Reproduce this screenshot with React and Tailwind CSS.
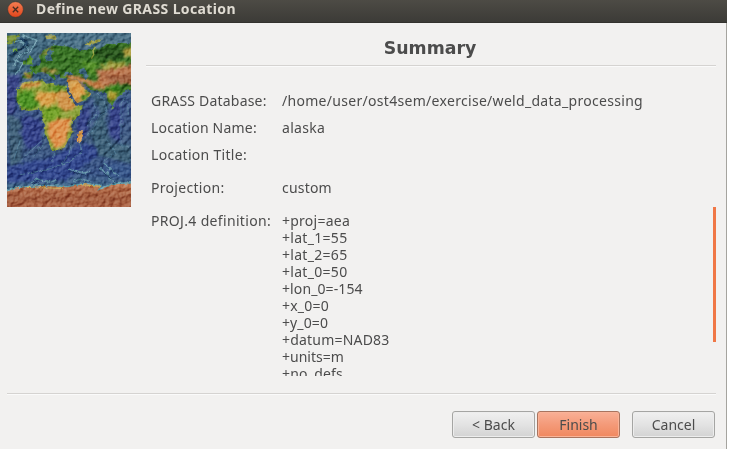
const summaryRows = [
  { label: 'GRASS Database:', value: '/home/user/ost4sem/exercise/weld_data_processing', gap: 'h-[27px]', labelFit: 'tracking-[0.2px]', fit: 'tracking-[0.3px]' },
  { label: 'Location Name:', value: 'alaska', gap: 'h-[27px]', labelFit: 'tracking-[0.2px]', fit: 'tracking-[0.3px]' },
  { label: 'Location Title:', value: '', gap: 'h-[33px]', labelFit: 'tracking-[0.3px]', fit: '' },
  { label: 'Projection:', value: 'custom', gap: 'h-[33px]', labelFit: 'tracking-[0.3px]', fit: 'tracking-[0.2px]' },
];

const projLines = [
  { text: '+proj=aea', fit: 'tracking-[0.25px]' },
  { text: '+lat_1=55', fit: 'tracking-[0.3px]' },
  { text: '+lat_2=65', fit: 'tracking-[0.3px]' },
  { text: '+lat_0=50', fit: 'tracking-[0.3px]' },
  { text: '+lon_0=-154', fit: 'tracking-[0.1px]' },
  { text: '+x_0=0', fit: 'tracking-[0.2px]' },
  { text: '+y_0=0', fit: 'tracking-[0.1px]' },
  { text: '+datum=NAD83', fit: 'tracking-[0.2px]' },
  { text: '+units=m', fit: '' },
  { text: '+no_defs', fit: 'tracking-[0.2px]' },
];

function ReliefMap() {
  return (
    <svg className="block h-[174px] w-[124px] shrink-0" viewBox="0 0 372 522" preserveAspectRatio="none">
      <defs>
        <linearGradient id="sea" x1="0" y1="0" x2="0" y2="1">
          <stop offset="0" stopColor="#456b80" />
          <stop offset="0.22" stopColor="#3e647e" />
          <stop offset="0.42" stopColor="#3b5487" />
          <stop offset="0.62" stopColor="#3e5a80" />
          <stop offset="0.8" stopColor="#385386" />
          <stop offset="0.9" stopColor="#456d8c" />
        </linearGradient>
        <linearGradient id="ice" x1="0" y1="0" x2="0" y2="1">
          <stop offset="0" stopColor="#c27c55" />
          <stop offset="0.5" stopColor="#a35d3f" />
          <stop offset="1" stopColor="#b46a4c" />
        </linearGradient>
        <filter id="coast" x="-5%" y="-5%" width="110%" height="110%" colorInterpolationFilters="sRGB">
          <feTurbulence type="fractalNoise" baseFrequency="0.12" numOctaves="2" seed="4" />
          <feDisplacementMap in="SourceGraphic" scale="10" xChannelSelector="R" yChannelSelector="G" />
        </filter>
        <filter id="soft" x="-20%" y="-20%" width="140%" height="140%" colorInterpolationFilters="sRGB">
          <feTurbulence type="fractalNoise" baseFrequency="0.1" numOctaves="3" seed="9" />
          <feDisplacementMap in="SourceGraphic" scale="24" xChannelSelector="R" yChannelSelector="G" />
          <feGaussianBlur stdDeviation="2.5" />
        </filter>
        <filter id="relief" x="0" y="0" width="100%" height="100%" colorInterpolationFilters="sRGB">
          <feTurbulence type="fractalNoise" baseFrequency="0.07 0.07" numOctaves="3" seed="12" result="n" />
          <feDiffuseLighting in="n" surfaceScale="6" diffuseConstant="0.72" lightingColor="#ffffff">
            <feDistantLight azimuth="225" elevation="45" />
          </feDiffuseLighting>
        </filter>
      </defs>
      <rect width="372" height="522" fill="url(#sea)" />
      <g filter="url(#soft)">
        <path d="M0 130L40 120L35 165L20 240L0 250Z" fill="#3a4688" />
        <path d="M50 245L100 260L108 330L60 350L40 300Z" fill="#35438a" />
        <path d="M215 240L250 215L240 300L205 340Z" fill="#38468a" />
        <path d="M310 225L345 205L340 330L305 300Z" fill="#38458a" />
        <path d="M0 395L110 380L230 330L290 350L180 440L0 450Z" fill="#33488e" />
        <path d="M290 390L372 400L372 435L300 430Z" fill="#37568a" />
        <path d="M0 240L40 260L45 390L10 400Z" fill="#3f5f78" />
        <path d="M250 170L310 200L295 260L310 330L372 340L372 390L280 370L245 300L280 250Z" fill="#3d6078" />
        <path d="M110 0L372 0L372 35L250 50L120 40Z" fill="#4b7187" />
      </g>
      <g fill="none" filter="url(#coast)" strokeLinejoin="round">
        <path d="M45 5L90 22L70 55L40 65L18 100M0 30L40 22L65 50M20 80L48 92L25 125" stroke="#74a1af" strokeWidth="4" />
        <path d="M40 15L62 30L35 55M5 70L30 55" stroke="#1e4162" strokeWidth="7" />
        <path d="M270 180L292 200L300 235L275 250L260 290L240 305M362 185L342 210L342 338L365 340M362 205L364 245M118 285L108 320L75 350L45 380M110 335L80 370M145 360L133 385M195 330L185 365L160 400M218 330L225 355L190 385L120 410L40 425M260 210L270 240L240 280M300 320L325 360L290 385M40 320L20 380" stroke="#54809a" strokeWidth="2.5" />
        <path d="M186 408L230 420L250 415M280 405L325 450M290 390L335 430M300 410L310 440M70 450L90 438L130 448L150 440M195 445L220 438L250 445" stroke="#6091a6" strokeWidth="4" />
        <path d="M280 412L325 447M190 415L235 427M75 455L98 444" stroke="#213d66" strokeWidth="3" />
      </g>
      <g filter="url(#coast)">
        <path d="M0 8L40 5L20 30L0 38Z" fill="#799239" />
        <path d="M18 48L30 46L31 54L14 57Z" fill="#69a137" />
        <path d="M114 8L142 7L150 17L118 18Z" fill="#9b9a4b" />
        <path d="M233 34L250 25L284 17L280 25L246 38Z" fill="#a2a34e" />
        <path d="M61 73L72 68L77 94L58 95Z" fill="#548d27" />
        <path d="M47 84L58 82L58 94L48 95Z" fill="#4c832b" />
        <path d="M96 73L112 50L140 37L186 41L212 51L240 52L262 43L275 55L299 32L324 34L343 29L385 34L385 178L358 168L344 184L327 195L315 220L303 205L298 177L270 175L252 171L229 150L225 137L187 140L160 134L158 122L151 126L140 124L150 141L140 138L115 116L80 120L70 137L49 136L51 120L72 117L67 103L94 98L104 86Z" fill="#397325" />
        <path d="M30 172L52 147L107 142L118 152L138 151L145 158L179 158L190 183L210 218L229 217L217 245L195 265L192 286L200 296L183 321L174 342L148 354L132 350L125 325L112 300L115 277L105 260L107 241L96 229L64 234L43 229L29 205Z" fill="#8ba23a" />
        <path d="M181 137L213 142L220 157L240 175L252 184L244 194L212 211L203 203L187 174Z" fill="#c99748" />
        <path d="M225 290L230 302L221 328L209 323L211 302Z" fill="#d49a4e" />
        <path d="M317 218L322 221L320 229L315 225Z" fill="#659c38" />
      </g>
      <g filter="url(#soft)">
        <path d="M39 153L100 146L94 162L53 167Z" fill="#d39a50" />
        <path d="M92 178L150 177L147 214L120 223L82 200Z" fill="#d9a14a" />
        <path d="M145 176L182 173L207 222L180 238L154 220Z" fill="#d1964d" />
        <path d="M128 262L190 250L190 282L181 315L165 346L138 345L120 290Z" fill="#df944e" />
        <path d="M110 225L155 222L162 255L125 264L108 252Z" fill="#71a027" />
        <path d="M32 178L76 178L98 218L78 229L47 225L32 202Z" fill="#4d9224" />
        <path d="M120 160L172 160L175 172L130 172Z" fill="#4f8a22" />
        <path d="M190 148L225 154L245 180L215 203L199 190Z" fill="#dda24e" />
        <path d="M240 172L252 184L244 194L218 207L228 190Z" fill="#4b8a26" />
        <path d="M165 128L218 130L258 145L293 142L292 170L263 167L230 147L190 140Z" fill="#c5824c" />
        <path d="M270 112L310 105L385 92L385 157L340 153L300 158L273 140Z" fill="#bb7850" />
        <path d="M295 128L385 125L385 158L340 150L305 147Z" fill="#a0603f" />
        <path d="M293 158L335 160L336 178L315 182L298 176Z" fill="#3d871e" />
        <path d="M302 175L332 177L326 192L316 209L305 196Z" fill="#b3a238" />
        <path d="M258 50L285 46L350 42L350 79L297 82L265 70Z" fill="#28551d" />
        <path d="M350 45L385 42L385 75L350 69Z" fill="#b0a044" />
        <path d="M94 71L119 50L140 45L127 58Z" fill="#b49649" />
        <path d="M54 122L72 123L70 134L53 132ZM95 108L150 110L146 124L112 113Z" fill="#c3954d" />
        <path d="M276 98L305 87L360 87L350 103L300 111Z" fill="#9fa142" />
        <path d="M225 85L275 88L262 125L244 118Z" fill="#56912a" />
      </g>
      <g filter="url(#coast)" fill="#3f6980">
        <path d="M124 52L142 54L131 67L138 83L123 84L112 80Z" />
        <path d="M169 116L194 117L198 126L170 128Z" />
        <path d="M215 110L231 104L240 119L242 138L230 137L229 125L218 119Z" />
        <path d="M181 160L188 174L208 211L237 205L228 215L206 218L179 174Z" fill="#395481" />
      </g>
      <path d="M253 77L260 65L258 52L265 42" fill="none" stroke="#9aa845" strokeWidth="4" />
      <g filter="url(#coast)">
        <path d="M-10 480L20 465L55 461L115 457L181 461L235 451L283 457L276 469L318 452L385 449L385 540L-10 540Z" fill="url(#ice)" stroke="#65a1ac" strokeWidth="4" />
        <path d="M60 463L170 466M220 455L282 460" fill="none" stroke="#ccb65a" strokeWidth="3" />
      </g>
      <rect width="372" height="522" filter="url(#relief)" className="mix-blend-soft-light" />
    </svg>
  );
}

function Rule() {
  return <div className="h-[2px] border-t border-[#d5d3d1] bg-[#fafafa]" />;
}

function DialogButton({ children, primary = false }) {
  const tone = primary
    ? 'border-[#a9745f] bg-linear-to-b from-[#f9b096] via-[#f49a79] to-[#f0885f] shadow-[inset_0_0_0_1px_#f9b398]'
    : 'border-[#a5a5a3] bg-linear-to-b from-[#f0f0f0] via-[#e3e3e3] to-[#d3d3d3] shadow-[inset_0_0_0_1px_#ededed]';
  return (
    <button className={`flex h-[27px] w-[83px] items-center justify-center rounded-[3px] border pb-px ${tone}`}>
      {children}
    </button>
  );
}

export default function App() {
  return (
    <div className="h-[449px] w-[729px] overflow-hidden bg-white font-['Noto_Sans','Open_Sans',sans-serif] text-[14px] leading-[17px] text-[#4c4c4c]">
      <div className="flex h-full w-[727px] flex-col">
        <header className="flex h-[23px] shrink-0 items-center border-b border-[#33322e] bg-linear-to-b from-[#4d4b45] to-[#3c3b37] pb-[4px] pl-[7px]">
          <svg className="h-[17px] w-[17px]" viewBox="0 0 17 17">
            <defs>
              <linearGradient id="close" x1="0" y1="0" x2="0" y2="1">
                <stop offset="0" stopColor="#f67e52" />
                <stop offset="1" stopColor="#df451c" />
              </linearGradient>
            </defs>
            <circle cx="8.5" cy="8.5" r="7.8" fill="url(#close)" stroke="#34322d" strokeWidth=".5" />
            <path d="M5.8 5.8L11.2 11.2M11.2 5.8L5.8 11.2" stroke="#472c20" strokeWidth="1.3" />
          </svg>
          <h1 className="ml-[12px] whitespace-nowrap pb-[2px] text-[14px] font-bold tracking-[0.38px] text-[#dfdbd2]">Define new GRASS Location</h1>
        </header>
        <div className="flex grow flex-col border-r border-[#a5a49f] bg-[#f2f1f0] px-[7px]">
          <div className="flex h-[370px] pt-[10px]">
            <ReliefMap />
            <main className="ml-[15px] flex w-[570px] flex-col">
              <h2 className="h-[32px] pt-[7px] pr-[2px] text-center font-['DejaVu_Sans',sans-serif] text-[17.33px] font-bold">Summary</h2>
              <Rule />
              <div className="flex pt-[25px]">
                <div className="w-[567px] pl-[5px]">
                  {summaryRows.map((row) => (
                    <div key={row.label} className={`flex whitespace-nowrap ${row.gap}`}>
                      <span className={`w-[131px] ${row.labelFit}`}>{row.label}</span>
                      <span className={row.fit}>{row.value}</span>
                    </div>
                  ))}
                  <div className="flex h-[164px] overflow-hidden whitespace-nowrap">
                    <span className="w-[131px] tracking-[0.33px]">PROJ.4 definition:</span>
                    <div>
                      {projLines.map((line) => (
                        <div key={line.text} className={line.fit}>{line.text}</div>
                      ))}
                    </div>
                  </div>
                </div>
                <div className="mt-[115px] h-[135px] w-[3px] bg-[#f07746]" />
              </div>
            </main>
          </div>
          <div className="mr-[3px]">
            <Rule />
          </div>
          <footer className="flex justify-end pt-[16px] pr-[4px]">
            <DialogButton>&lt; Back</DialogButton>
            <div className="ml-[2px] mr-[12px]">
              <DialogButton primary>Finish</DialogButton>
            </div>
            <DialogButton>Cancel</DialogButton>
          </footer>
        </div>
      </div>
    </div>
  );
}
